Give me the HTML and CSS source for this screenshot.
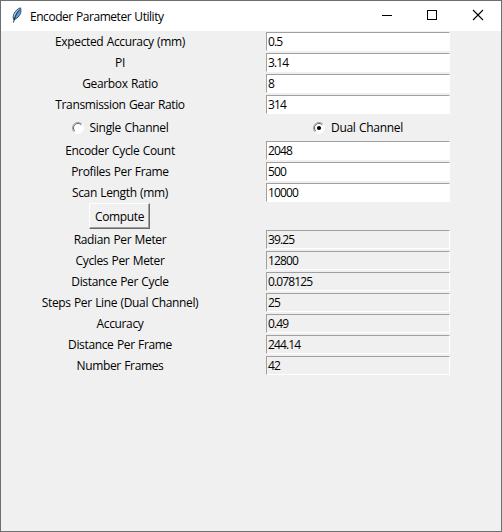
FILE: index.html
```html
<!DOCTYPE html>
<html lang="en">
<head>
<meta charset="utf-8">
<title>Encoder Parameter Utility</title>
<link rel="stylesheet" href="styles.css">
</head>
<body>
<div class="window">
  <header class="titlebar">
    <svg class="feather" width="16" height="16" viewBox="0 0 16 16">
      <path d="M4.500 12.500C3 8 6.500 2.500 11.500 .8c1.500 4-.5 9-5.500 11.500z" fill="#5a9be0" stroke="#26364a" stroke-width=".8"/>
      <path d="M10.500 3C8 5.500 6 9 4.500 15.500" fill="none" stroke="#111" stroke-width=".9"/>
      <path d="M9.500 2.800C7 4.500 5.500 7 5.200 9.500" fill="none" stroke="#b4d8f8" stroke-width="1"/>
    </svg>
    <span class="title">Encoder Parameter Utility</span>
    <svg class="controls" width="138" height="30" viewBox="0 0 138 30" fill="none" stroke="#000" shape-rendering="crispEdges">
      <path d="M19 14.500h10"/>
      <path d="M64.500 9.500h9v9h-9z"/>
      <path d="M110 9l10 10M120 9l-10 10" shape-rendering="auto" stroke-width="1.100"/>
    </svg>
  </header>
  <main class="form">
    <label><span>Expected Accuracy (mm)</span></label><div class="entry"><span>0.5</span></div>
    <label><span>PI</span></label><div class="entry"><span>3.14</span></div>
    <label><span>Gearbox Ratio</span></label><div class="entry"><span>8</span></div>
    <label><span>Transmission Gear Ratio</span></label><div class="entry"><span>314</span></div>
    <div class="radio">
      <svg width="12" height="12" viewBox="0 0 12 12"><circle cx="6" cy="6" r="5" fill="#fff"/><path d="M2.100 9.900A5.500 5.500 0 0 1 9.900 2.100" fill="none" stroke="#a0a0a0"/><path d="M2.800 9.200A4.500 4.500 0 0 1 9.200 2.800" fill="none" stroke="#696969"/><path d="M9.900 2.100A5.500 5.500 0 0 1 2.100 9.900" fill="none" stroke="#fff"/></svg>
      <span>Single Channel</span>
    </div>
    <div class="radio">
      <svg width="12" height="12" viewBox="0 0 12 12"><circle cx="6" cy="6" r="5" fill="#fff"/><path d="M2.100 9.900A5.500 5.500 0 0 1 9.900 2.100" fill="none" stroke="#a0a0a0"/><path d="M2.800 9.200A4.500 4.500 0 0 1 9.200 2.800" fill="none" stroke="#696969"/><path d="M9.900 2.100A5.500 5.500 0 0 1 2.100 9.900" fill="none" stroke="#fff"/><circle cx="6" cy="6" r="2.100" fill="#000"/></svg>
      <span>Dual Channel</span>
    </div>
    <label><span>Encoder Cycle Count</span></label><div class="entry"><span>2048</span></div>
    <label><span>Profiles Per Frame</span></label><div class="entry"><span>500</span></div>
    <label><span>Scan Length (mm)</span></label><div class="entry"><span>10000</span></div>
    <button class="compute"><span>Compute</span></button><div></div>
    <label><span>Radian Per Meter</span></label><div class="entry readonly"><span>39.25</span></div>
    <label><span>Cycles Per Meter</span></label><div class="entry readonly"><span>12800</span></div>
    <label><span>Distance Per Cycle</span></label><div class="entry readonly"><span>0.078125</span></div>
    <label><span>Steps Per Line (Dual Channel)</span></label><div class="entry readonly"><span>25</span></div>
    <label><span>Accuracy</span></label><div class="entry readonly"><span>0.49</span></div>
    <label><span>Distance Per Frame</span></label><div class="entry readonly"><span>244.14</span></div>
    <label><span>Number Frames</span></label><div class="entry readonly"><span>42</span></div>
  </main>
</div>
</body>
</html>
```
FILE: styles.css
```css
* { box-sizing: border-box; }
body {
  margin: 0;
  font: 12px/17px "Open Sans", "Noto Sans", sans-serif;
  letter-spacing: -0.35px;
  word-spacing: 0.6px;
  color: #000;
}
.window {
  width: 502px;
  height: 532px;
  border: 1px solid #6e6e6e;
  background: #f0f0f0;
}
.titlebar {
  display: flex;
  align-items: center;
  height: 30px;
  background: #fff;
  padding-left: 8px;
}
.feather { margin-right: 5px; margin-top: -2px; }
.title { white-space: nowrap; letter-spacing: -0.46px; }
.controls { margin-left: auto; }
.form {
  display: grid;
  grid-template-columns: 238px 238px;
  grid-template-rows: repeat(4, 21px) 25px repeat(3, 21px) 26px repeat(7, 21px);
  align-items: center;
  justify-items: center;
}
.form label, .radio span { white-space: nowrap; }
.entry {
  width: 184px;
  height: 19px;
  padding-left: 1px;
  background: #fff;
  border: 1px solid;
  border-color: #a0a0a0 #fff #fff #a0a0a0;
  letter-spacing: -0.88px;
}
.readonly { background: #f0f0f0; }
.radio { display: flex; align-items: center; gap: 6px; }
.radio span { letter-spacing: -0.3px; }
.compute {
  width: 61px;
  height: 26px;
  margin-right: 1px;
  padding: 0;
  font: inherit;
  letter-spacing: inherit;
  color: #000;
  background: #f0f0f0;
  border: 1px solid;
  border-color: #fff #696969 #696969 #fff;
  box-shadow: inset -1px -1px #a0a0a0;
}
```
